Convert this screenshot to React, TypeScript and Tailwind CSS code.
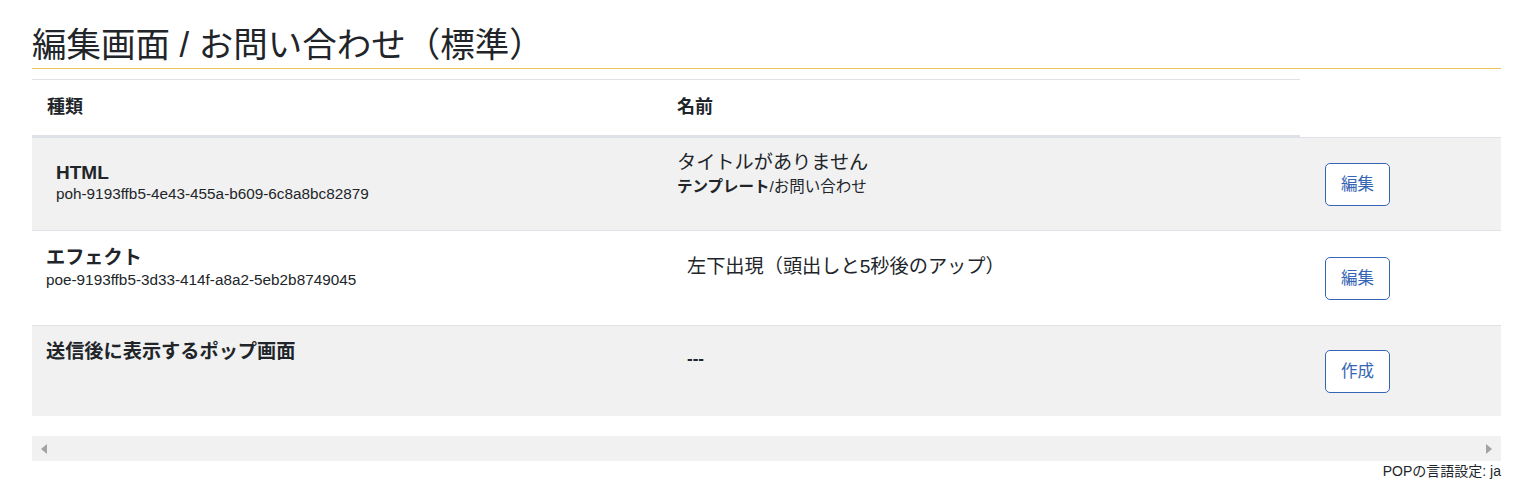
import React from "react";

function ActionButton({ label }: { label: string }) {
  return (
    <button className="w-[65px] h-[43px] rounded-[5px] border border-[#3565b5] bg-white text-[#3565b5] text-[16.5px]">
      {label}
    </button>
  );
}

export default function App() {
  return (
    <div
      className="w-[1515px] h-[486px] bg-white text-[#212529] overflow-hidden"
      style={{ fontFamily: '"Liberation Sans", "Noto Sans CJK JP", sans-serif' }}
    >
      <div className="ml-[32px] mr-[14px] pt-[25px]">
        {/* Title */}
        <h1 className="text-[34.5px] leading-[40px] pb-[3px] border-b border-[#eec55b] whitespace-nowrap">
          編集画面 / お問い合わせ（標準）
        </h1>

        {/* Header */}
        <div className="mt-[10px] w-[1268px] h-[58px] border-t border-b-2 border-[#dee2e6] flex items-center font-bold text-[18px]">
          <div className="w-[630px] pl-[15px]">種類</div>
          <div className="pl-[15px]">名前</div>
        </div>

        {/* Row 1 */}
        <div className="h-[93px] flex border-t border-[#dee2e6] bg-[#f1f1f1]">
          <div className="w-[630px] pl-[24px] pt-[24px]">
            <div className="text-[19px] leading-[22px] font-bold">HTML</div>
            <div className="text-[15.3px] leading-[20px]">poh-9193ffb5-4e43-455a-b609-6c8a8bc82879</div>
          </div>
          <div className="w-[638px] pl-[15px] pt-[12px]">
            <div className="text-[19.2px] leading-[26px]">タイトルがありません</div>
            <div className="text-[15.5px] leading-[22px]">
              <span className="font-bold">テンプレート</span>/お問い合わせ
            </div>
          </div>
          <div className="flex-1 flex items-center pl-[25px]">
            <ActionButton label="編集" />
          </div>
        </div>

        {/* Row 2 */}
        <div className="h-[95px] flex border-t border-[#dee2e6] bg-white">
          <div className="w-[630px] pl-[14px] pt-[14px]">
            <div className="text-[19.2px] leading-[25px] font-bold">エフェクト</div>
            <div className="text-[15.3px] leading-[20px]">poe-9193ffb5-3d33-414f-a8a2-5eb2b8749045</div>
          </div>
          <div className="w-[638px] pl-[25px] pt-[23px]">
            <div className="text-[19.2px] leading-[26px]">左下出現（頭出しと5秒後のアップ）</div>
          </div>
          <div className="flex-1 flex items-center pl-[25px]">
            <ActionButton label="編集" />
          </div>
        </div>

        {/* Row 3 */}
        <div className="h-[91px] flex border-t border-[#dee2e6] bg-[#f1f1f1]">
          <div className="w-[630px] pl-[14px] pt-[13px]">
            <div className="text-[19.2px] leading-[26px] font-bold">送信後に表示するポップ画面</div>
          </div>
          <div className="w-[638px] pl-[25px] pt-[21px]">
            <div className="text-[17px] leading-[24px] font-bold">---</div>
          </div>
          <div className="flex-1 flex items-center pl-[25px]">
            <ActionButton label="作成" />
          </div>
        </div>

        {/* Scrollbar */}
        <div className="mt-[20px] h-[25px] bg-[#f1f1f1] flex items-center justify-between px-[8px]">
          <svg width="8" height="10" viewBox="0 0 8 10">
            <path d="M7 0 L1 5 L7 10 Z" fill="#a3a3a3" />
          </svg>
          <svg width="8" height="10" viewBox="0 0 8 10">
            <path d="M1 0 L7 5 L1 10 Z" fill="#a3a3a3" />
          </svg>
        </div>

        {/* Footer */}
        <div className="text-right text-[14px] leading-[20px]">POPの言語設定: ja</div>
      </div>
    </div>
  );
}
